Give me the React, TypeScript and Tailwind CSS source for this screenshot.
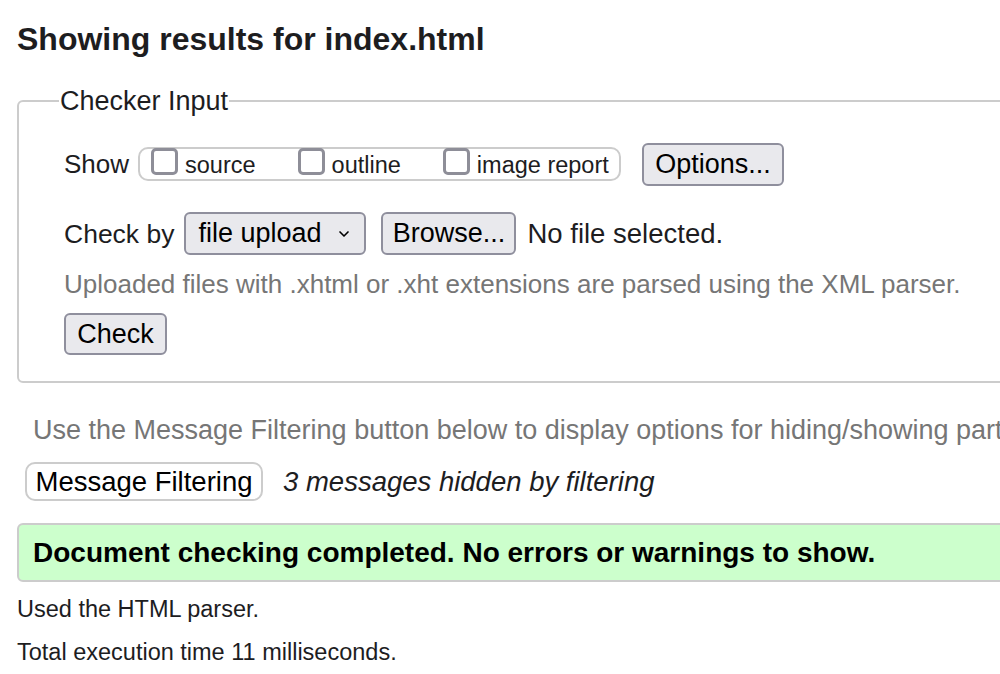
import { ChevronDown } from "lucide-react"

function Box({ label }: { label: string }) {
  return (
    <label className="flex items-start gap-[7px]">
      <input
        type="checkbox"
        className="mt-[-1px] h-[27px] w-[27px] appearance-none rounded-[5px] border-[3px] border-[#8e8e98] bg-white"
      />
      <span className="mt-[3px] text-[23.5px] leading-[27px]">{label}</span>
    </label>
  )
}

const btn =
  "rounded-[6px] border-2 border-[#8f8f9d] bg-[#e9e9ed] text-[27px] leading-none text-black"

export default function App() {
  return (
    <div className="h-[674px] w-[1000px] overflow-hidden bg-white font-['Liberation_Sans',Arial,sans-serif] text-[#1d1d1f]">
      <div className="w-[1300px] pl-[17px]">
        <h2 className="mt-[19px] text-[32px] font-bold leading-[40px]">Showing results for index.html</h2>

        <fieldset className="mt-[27px] w-[1200px] rounded-[6px] border-2 border-[#cccccc] pb-[26px] pl-[45px] pt-[26px]">
          <legend className="ml-[-5px] px-[1px] text-[27px] leading-[30px]">Checker Input</legend>

          <div className="flex h-[44px] items-center">
            <span className="mr-[9px] text-[26px] leading-[30px]">Show</span>
            <div className="flex h-[34px] w-[483px] items-start gap-[42px] rounded-[10px] border-2 border-[#cccccc] pl-[11px]">
              <Box label="source" />
              <Box label="outline" />
              <Box label="image report" />
            </div>
            <button className={`${btn} ml-[21px] h-[43px] w-[142px]`}>Options...</button>
          </div>

          <div className="mt-[26px] flex h-[43px] items-center">
            <span className="mr-[10px] text-[26.5px] leading-[30px]">Check by</span>
            <div className={`${btn} flex h-[43px] w-[182px] items-center justify-between pl-[12px] pr-[12px]`}>
              <span>file upload</span>
              <ChevronDown size={16} strokeWidth={2.5} />
            </div>
            <button className={`${btn} ml-[15px] h-[43px] w-[135px]`}>Browse...</button>
            <span className="ml-[11px] text-[27.5px] leading-[30px]">No file selected.</span>
          </div>

          <p className="mt-[14px] text-[26px] leading-[30px] text-[#767676]">
            Uploaded files with .xhtml or .xht extensions are parsed using the XML parser.
          </p>

          <button className={`${btn} mt-[14px] h-[42px] w-[103px]`}>Check</button>
        </fieldset>

        <p className="mt-[32px] whitespace-nowrap pl-[16px] text-[27px] leading-[30px] text-[#767676]">
          Use the Message Filtering button below to display options for hiding/showing particular messages, and to see total counts of errors and warnings.
        </p>

        <div className="mt-[17px] flex items-center pl-[8px]">
          <button className="h-[39px] w-[238px] rounded-[10px] border-2 border-[#cccccc] bg-white text-[27.5px] leading-none text-black">
            Message Filtering
          </button>
          <span className="ml-[20px] text-[27.5px] italic leading-[30px]">3 messages hidden by filtering</span>
        </div>

        <div className="mt-[22px] flex h-[59px] w-[1200px] items-center rounded-[6px] border-2 border-[#cccccc] bg-[#ccffcc] pl-[14px]">
          <span className="text-[28px] font-bold text-black">Document checking completed. No errors or warnings to show.</span>
        </div>

        <p className="mt-[13px] text-[23.5px] leading-[28px]">Used the HTML parser.</p>
        <p className="mt-[15px] text-[23.5px] leading-[28px]">Total execution time 11 milliseconds.</p>
      </div>
    </div>
  )
}
